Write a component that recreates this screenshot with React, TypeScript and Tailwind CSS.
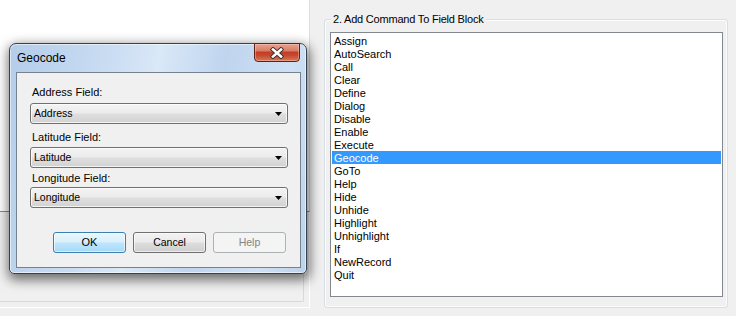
import React from "react";

const items = [
  "Assign",
  "AutoSearch",
  "Call",
  "Clear",
  "Define",
  "Dialog",
  "Disable",
  "Enable",
  "Execute",
  "Geocode",
  "GoTo",
  "Help",
  "Hide",
  "Unhide",
  "Highlight",
  "Unhighlight",
  "If",
  "NewRecord",
  "Quit",
];

function Combo({ value }: { value: string }) {
  return (
    <div className="ml-[13px] mr-[12px] h-[21px] flex items-center justify-between rounded-[3px] border border-[#707070] bg-[linear-gradient(to_bottom,#f3f3f3_0%,#ececec_45%,#dedede_55%,#d2d2d2_100%)] shadow-[inset_0_0_0_1px_rgba(255,255,255,0.75)] pl-[3px] pr-[5px] text-[10.5px] leading-[13px] text-black">
      <span>{value}</span>
      <svg width="7" height="4" viewBox="0 0 7 4" className="block">
        <polygon points="0,0 7,0 3.5,4" fill="#000" />
      </svg>
    </div>
  );
}

function Label({ children, className }: { children: React.ReactNode; className: string }) {
  return (
    <div className={"pl-[15px] h-[13px] text-[11px] leading-[13px] text-black " + className}>
      {children}
    </div>
  );
}

export default function App() {
  return (
    <div className="relative w-[736px] h-[316px] overflow-hidden bg-[#f0f0f0] font-['Liberation_Sans',Arial,sans-serif] text-black">
      <div className="flex h-full">
        {/* left column content behind dialog */}
        <div className="w-[310px] h-full flex flex-col">
          <div className="h-[212px] bg-white border-b border-b-[#8a8a8a] border-r border-r-[#dedede]" />
          <div className="w-[310px] h-[96px] border-r border-b border-white">
            <div className="w-[304px] h-[90px] border-r border-b border-[#d8d8d8] rounded-br-[2px]" />
          </div>
        </div>

        {/* right column group box */}
        <div className="ml-[14px] mt-[19px]">
          <div className="relative w-[404px] h-[289px] rounded-[3px] border border-[#d5dfe5] shadow-[inset_0_0_0_1px_rgba(255,255,255,0.8)] pt-[12px] pl-[5px] pr-[4px] pb-[10px] flex flex-col">
            <span className="absolute -top-[8px] left-[6px] px-[2px] bg-[#f0f0f0] text-[11px] leading-[14px] tracking-[-0.2px] text-black">
              2. Add Command To Field Block
            </span>
            <div className="flex-1 border border-[#828790] bg-white p-[1px]">
              {items.map((it) => (
                <div
                  key={it}
                  className={
                    it === "Geocode"
                      ? "h-[13px] leading-[14px] text-[11px] pl-[2px] bg-[#3399ff] text-white"
                      : "h-[13px] leading-[14px] text-[11px] pl-[2px] text-black"
                  }
                >
                  {it}
                </div>
              ))}
            </div>
          </div>
        </div>
      </div>

      {/* Geocode dialog window */}
      <div className="absolute left-[9px] top-[43px] w-[298px] h-[231px] rounded-t-[7px] rounded-b-[5px] border border-[#36414f] bg-[linear-gradient(100deg,#b4cdea_0%,#c9dcf2_30%,#dae8f7_45%,#bfd5ee_65%,#cfe0f3_85%,#bcd3ed_100%)] shadow-[1px_4px_12px_2px_rgba(0,0,0,0.55),inset_0_0_0_1px_rgba(255,255,255,0.55)] flex flex-col pl-[6px] pr-[5px] pb-[5px]">
        {/* title bar */}
        <div className="h-[28px] flex items-center pl-[1px] text-[12px] text-black">Geocode</div>

        {/* close button */}
        <div className="absolute -top-[1px] right-[6px] w-[46px] h-[19px] rounded-b-[4px] border border-[#5e2318] bg-[linear-gradient(to_bottom,#e8a290_0%,#d9806a_38%,#c23d24_50%,#c64a30_68%,#d9785a_100%)] shadow-[inset_0_0_0_1px_rgba(255,215,200,0.4)] flex items-center justify-center">
          <svg width="14" height="12" viewBox="0 0 14 12" className="block">
            <path d="M3 2.5 L11 9.5 M11 2.5 L3 9.5" stroke="#3a3030" strokeWidth="4.4" strokeLinecap="square" />
            <path d="M3 2.5 L11 9.5 M11 2.5 L3 9.5" stroke="#ffffff" strokeWidth="2.6" strokeLinecap="square" />
          </svg>
        </div>

        {/* client area */}
        <div className="flex-1 border border-[#75828f] bg-[#f0f0f0] flex flex-col pt-[13px]">
          <Label className="">Address Field:</Label>
          <div className="mt-[4px]">
            <Combo value="Address" />
          </div>
          <Label className="mt-[7px]">Latitude Field:</Label>
          <div className="mt-[3px]">
            <Combo value="Latitude" />
          </div>
          <Label className="mt-[4px]">Longitude Field:</Label>
          <div className="mt-[2px]">
            <Combo value="Longitude" />
          </div>

          <div className="mt-[24px] flex justify-end gap-[7px] pr-[14px]">
            <div className="w-[73px] h-[21px] rounded-[3px] border border-[#3c7fb1] bg-[linear-gradient(to_bottom,#eaf6fd_0%,#d9f0fc_48%,#bee6fd_52%,#a7d9f5_100%)] shadow-[inset_0_0_0_1px_rgba(255,255,255,0.6)] flex items-center justify-center text-[11px] text-black">
              OK
            </div>
            <div className="w-[73px] h-[21px] rounded-[3px] border border-[#707070] bg-[linear-gradient(to_bottom,#f2f2f2_0%,#ebebeb_48%,#dddddd_52%,#cfcfcf_100%)] shadow-[inset_0_0_0_1px_rgba(255,255,255,0.6)] flex items-center justify-center text-[10.5px] text-black">
              Cancel
            </div>
            <div className="w-[73px] h-[21px] rounded-[3px] border border-[#adb2b5] bg-[#f4f4f4] flex items-center justify-center text-[10.5px] text-[#838383]">
              Help
            </div>
          </div>
        </div>
      </div>
    </div>
  );
}
